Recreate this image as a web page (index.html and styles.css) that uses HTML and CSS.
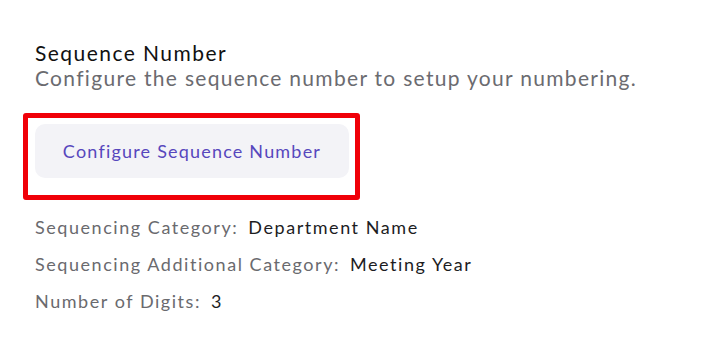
FILE: index.html
```html
<!doctype html>
<html>
<head>
<meta charset='utf-8'>
<title>sequence number</title>
<link rel="stylesheet" href="styles.css">
</head>
<body>
<div class='panel'>
  <div class='title'>Sequence Number</div>
  <div class='subtitle'>Configure the sequence number to setup your numbering.</div>
  <div class='highlight'>
    <button class='configure'>Configure Sequence Number</button>
  </div>
  <div class='rows'>
    <div class='row'><span class='label'>Sequencing Category:</span><span class='value'>Department Name</span></div>
    <div class='row'><span class='label'>Sequencing Additional Category:</span><span class='value'>Meeting Year</span></div>
    <div class='row'><span class='label'>Number of Digits:</span><span class='value'>3</span></div>
  </div>
</div>
</body>
</html>
```

FILE: styles.css
```css
body {
  background: white;
  margin: 0;
  font-family: Lato, "Open Sans", sans-serif;
}

.panel {
  padding: 40px 0 0 35px;
}

.title {
  font-size: 21px;
  line-height: 25px;
  color: #111;
  letter-spacing: 1.45px;
}

.subtitle {
  font-size: 21px;
  line-height: 26px;
  color: #6b6b70;
  letter-spacing: 1.3px;
}

.highlight {
  display: inline-block;
  margin: 22px 0 0 -12px;
  border: 5px solid #f00008;
  border-radius: 3px;
  padding: 6px 6px 17px 7px;
}

.configure {
  display: block;
  width: 314px;
  height: 54px;
  border: 0;
  border-radius: 10px;
  background: #f3f3f7;
  color: #5747bd;
  font-family: Lato, "Open Sans", sans-serif;
  font-size: 18px;
  letter-spacing: 1.2px;
  cursor: pointer;
}

.rows {
  margin-top: 9px;
}

.row {
  font-size: 18px;
  line-height: 37px;
  letter-spacing: 1.55px;
}

.label {
  color: #6a6a6e;
  margin-right: 10px;
}

.value {
  color: #1d1d1f;
}
```
